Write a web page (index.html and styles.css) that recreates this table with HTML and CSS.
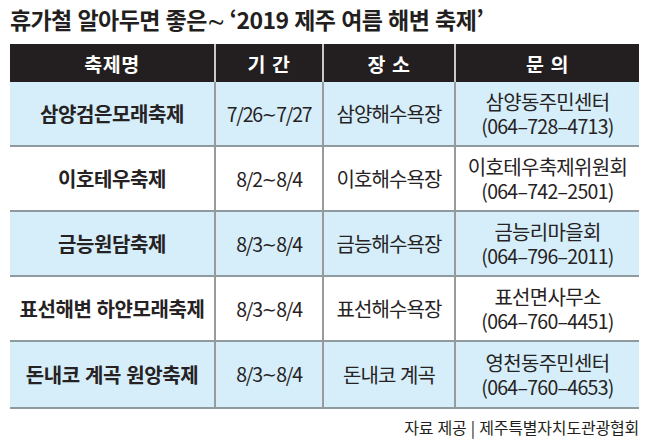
FILE: index.html
```html
<!DOCTYPE html>
<html lang="ko">
<head>
<meta charset="utf-8">
<link rel="stylesheet" href="styles.css">
</head>
<body>
<div class="page">
  <h1 class="title">휴가철 알아두면 좋은<span class="ttl">∼</span> ‘2019 제주 여름 해변 축제’</h1>
  <div class="table">
    <div class="cell head">축제명</div>
    <div class="cell head sep">기 간</div>
    <div class="cell head sep">장 소</div>
    <div class="cell head sep">문 의</div>

    <div class="cell name blue">삼양검은모래축제</div>
    <div class="cell date blue sep">7/26<span class="tl">∼</span>7/27</div>
    <div class="cell place blue sep">삼양해수욕장</div>
    <div class="cell contact blue sep"><span class="org">삼양동주민센터</span><span class="num">(064–728–4713)</span></div>

    <div class="cell name">이호테우축제</div>
    <div class="cell date sep">8/2<span class="tl">∼</span>8/4</div>
    <div class="cell place sep">이호해수욕장</div>
    <div class="cell contact sep"><span class="org">이호테우축제위원회</span><span class="num">(064–742–2501)</span></div>

    <div class="cell name blue">금능원담축제</div>
    <div class="cell date blue sep">8/3<span class="tl">∼</span>8/4</div>
    <div class="cell place blue sep">금능해수욕장</div>
    <div class="cell contact blue sep"><span class="org">금능리마을회</span><span class="num">(064–796–2011)</span></div>

    <div class="cell name">표선해변 하얀모래축제</div>
    <div class="cell date sep">8/3<span class="tl">∼</span>8/4</div>
    <div class="cell place sep">표선해수욕장</div>
    <div class="cell contact sep"><span class="org">표선면사무소</span><span class="num">(064–760–4451)</span></div>

    <div class="cell name blue">돈내코 계곡 원앙축제</div>
    <div class="cell date blue sep">8/3<span class="tl">∼</span>8/4</div>
    <div class="cell place blue sep">돈내코 계곡</div>
    <div class="cell contact blue sep"><span class="org">영천동주민센터</span><span class="num">(064–760–4653)</span></div>
  </div>
  <p class="source">자료 제공 | 제주특별자치도관광협회</p>
</div>
</body>
</html>
```

FILE: styles.css
```css
* { box-sizing: border-box; }
html, body { margin: 0; padding: 0; background: #ffffff; }
body {
  width: 650px;
  height: 442px;
  overflow: hidden;
  font-family: "Noto Sans CJK KR", "Noto Sans", sans-serif;
  color: #231f20;
}
.page {
  padding: 3px 11px 0 10px;
}
.title {
  margin: 0 0 9px 0;
  height: 32px;
  font-size: 23px;
  line-height: 32px;
  font-weight: 700;
  letter-spacing: -0.6px;
  color: #231f20;
  white-space: nowrap;
}
.ttl { letter-spacing: -1px; }
.table {
  display: grid;
  grid-template-columns: 204px 108px 132px 185px;
  grid-template-rows: 38px repeat(5, 65px);
  width: 629px;
  border-bottom: 2px solid #8e9a9e;
}
.cell {
  display: flex;
  flex-direction: column;
  align-items: center;
  justify-content: center;
  text-align: center;
  border-bottom: 2px solid #8e9a9e;
  white-space: nowrap;
  font-size: 20px;
  letter-spacing: -0.6px;
  color: #262223;
}
.cell.sep { border-left: 2px solid #9a9a9a; }
.table > .cell:nth-last-child(-n+4) { border-bottom: none; }
.head {
  background: #231f20;
  color: #ffffff;
  font-weight: 700;
  font-size: 19.5px;
  letter-spacing: 0.5px;
  border-bottom: none;
}
.head.sep { border-left: 2px solid #c9c9c9; }
.blue { background: #d5eef9; }
.name { font-weight: 700; font-size: 20px; letter-spacing: -0.4px; }
.date {
  display: block;
  line-height: 63px;
  font-family: "Liberation Sans Narrow", "Noto Sans CJK KR", sans-serif;
  font-size: 19.5px;
  letter-spacing: -1.3px;
}
.tl {
  font-family: "DejaVu Sans", sans-serif;
  font-size: 18px;
  font-weight: 400;
  letter-spacing: -0.5px;
  vertical-align: 1px;
}
.place { font-weight: 400; font-size: 20px; letter-spacing: -0.9px; }
.org {
  display: block;
  line-height: 24px;
  height: 24px;
  font-size: 20px;
  letter-spacing: -0.7px;
}
.num {
  display: block;
  line-height: 24px;
  height: 24px;
  font-family: "Liberation Sans Narrow", "Noto Sans CJK KR", sans-serif;
  font-size: 19.5px;
  letter-spacing: -0.7px;
}
.source {
  margin: 7px 0 0 0;
  width: 629px;
  text-align: right;
  font-size: 16px;
  line-height: 22px;
  letter-spacing: -0.2px;
  color: #231f20;
}
```
